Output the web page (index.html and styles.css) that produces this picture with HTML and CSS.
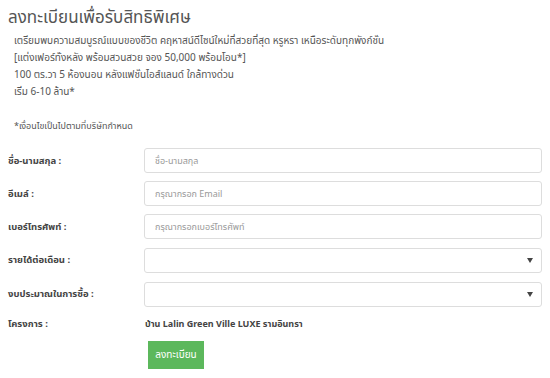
FILE: index.html
```html
<!DOCTYPE html>
<html lang="th">
<head>
  <meta charset="UTF-8">
  <title>ลงทะเบียนเพื่อรับสิทธิพิเศษ</title>
  <link rel="stylesheet" href="styles.css">
</head>
<body>
  <div class="register">
    <h2>ลงทะเบียนเพื่อรับสิทธิพิเศษ</h2>
    <div class="promo">
      <p>เตรียมพบความสมบูรณ์แบบของชีวิต คฤหาสน์ดีไซน์ใหม่ที่สวยที่สุด หรูหรา เหนือระดับทุกพังก์ชั่น<br>
      [แต่งเฟอร์ทั้งหลัง พร้อมสวนสวย จอง 50,000 พร้อมโอน*]<br>
      100 ตร.วา 5 ห้องนอน หลังแฟชั่นไอส์แลนด์ ใกล้ทางด่วน<br>
      เริ่ม 6-10 ล้าน*</p>
      <p class="note">*เงื่อนไขเป็นไปตามที่บริษัทกำหนด</p>
    </div>
    <form class="reg-form">
      <label for="fullname">ชื่อ-นามสกุล :</label>
      <input type="text" id="fullname" placeholder="ชื่อ-นามสกุล">

      <label for="email">อีเมล์ :</label>
      <input type="email" id="email" placeholder="กรุณากรอก Email">

      <label for="phone">เบอร์โทรศัพท์ :</label>
      <input type="text" id="phone" placeholder="กรุณากรอกเบอร์โทรศัพท์">

      <label for="income">รายได้ต่อเดือน :</label>
      <div class="select-wrap">
        <select id="income"><option></option></select>
      </div>

      <label for="budget">งบประมาณในการซื้อ :</label>
      <div class="select-wrap">
        <select id="budget"><option></option></select>
      </div>

      <label>โครงการ :</label>
      <div class="project">บ้าน Lalin Green Ville LUXE รามอินทรา</div>

      <div></div>
      <div><button type="submit" class="btn-submit">ลงทะเบียน</button></div>
    </form>
  </div>
</body>
</html>
```
FILE: styles.css
```css
body {
  margin: 0;
  font-family: "Noto Sans", "Noto Sans Thai", sans-serif;
  color: #555;
  background: #fff;
}
.register {
  padding: 5px 8px 0 8px;
}
.register h2 {
  margin: 0;
  font-size: 17px;
  font-weight: normal;
  line-height: 24px;
  color: #555;
}
.promo {
  padding-left: 6px;
  margin-top: 3px;
  font-size: 10px;
  line-height: 17px;
  color: #555;
}
.promo p {
  margin: 0;
}
.promo .note {
  margin-top: 17px;
  font-size: 9px;
}
.reg-form {
  display: grid;
  grid-template-columns: 136px 398px;
  row-gap: 8px;
  align-items: center;
  margin-top: 14px;
}
.reg-form label {
  font-size: 9.5px;
  font-weight: bold;
  color: #444;
}
.reg-form input,
.reg-form select {
  box-sizing: border-box;
  width: 100%;
  height: 25px;
  border: 1px solid #ddd;
  border-radius: 3px;
  padding: 0 10px;
  font-family: inherit;
  font-size: 9px;
  color: #555;
  background: #fff;
}
.reg-form input::placeholder {
  color: #999;
}
.select-wrap {
  position: relative;
}
.reg-form select {
  appearance: none;
}
.select-wrap::after {
  content: "";
  position: absolute;
  right: 9px;
  top: 11px;
  border-left: 3px solid transparent;
  border-right: 3px solid transparent;
  border-top: 5px solid #444;
  pointer-events: none;
}
.project {
  font-size: 9px;
  font-weight: bold;
  color: #444;
  padding-left: 1px;
  line-height: 18px;
}
.btn-submit {
  margin-left: 4px;
  margin-top: 0;
  width: 56px;
  height: 28px;
  border: none;
  background: #5cb85c;
  color: #fff;
  font-family: inherit;
  font-size: 10px;
  cursor: pointer;
}
```
